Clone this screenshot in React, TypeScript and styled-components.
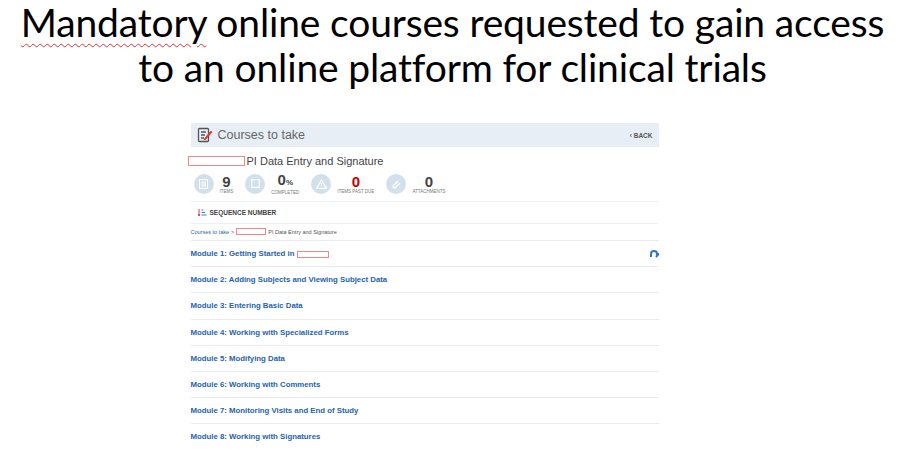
import React from "react";
import styled, { createGlobalStyle } from "styled-components";

const G = createGlobalStyle`
  body { margin: 0; background: #fff; font-family: "Liberation Sans", Arial, sans-serif; }
`;
const Page = styled.div`
  width: 905px; height: 474px; overflow: hidden; display: flex; flex-direction: column; align-items: center;
`;
const Title = styled.h1`
  margin: 0 0 0; font-family: Lato, "Open Sans", sans-serif; font-weight: 400; font-size: 39px;
  line-height: 45px; text-align: center; color: #000; letter-spacing: -0.15px;
`;
const Squig = styled.span`
  text-decoration: underline wavy #d33; text-decoration-thickness: 1px; text-underline-offset: 6px;
`;
const Panel = styled.div`
  width: 468px; margin: 33px 0 0 -56px; display: flex; flex-direction: column; font-size: 8px;
`;
const Header = styled.div`
  height: 24px; background: #e8eef6; display: flex; align-items: center; padding: 0 6px; gap: 5px;
  color: #666; font-size: 12.5px;
`;
const Back = styled.span`
  margin-left: auto; font-size: 6.5px; font-weight: bold; color: #555;
`;
const Red = styled.span<{ w: number }>`
  display: inline-block; width: ${p => p.w}px; height: 8px; border: 1px solid #e88; vertical-align: middle;
`;
const CourseTitle = styled.div`
  display: flex; align-items: center; gap: 2px; margin-top: 8px; font-size: 11px; color: #444; margin-left: -3px;
`;
const Stats = styled.div`
  display: flex; align-items: center; gap: 6px; padding: 5px 0 6px 3px; border-bottom: 1px solid #eef1f4;
`;
const Circle = styled.div`
  width: 20px; height: 20px; border-radius: 50%; background: #d2e0ec; display: flex; align-items: center; justify-content: center;
`;
const Stat = styled.div`
  display: flex; flex-direction: column; align-items: center; margin-right: 6px;
`;
const Num = styled.span<{ red?: boolean }>`
  font-size: 15px; font-weight: bold; line-height: 15px; color: ${p => (p.red ? "#c00" : "#444")};
`;
const Lbl = styled.span`
  font-size: 4.5px; color: #777; text-transform: uppercase;
`;
const Seq = styled.div`
  display: flex; align-items: center; gap: 3px; padding: 6px 7px; font-size: 6.5px; font-weight: bold; color: #444;
  border-bottom: 1px solid #eef1f4;
`;
const Crumb = styled.div`
  font-size: 5.5px; color: #555; padding: 4px 0 5px; display: flex; align-items: center; gap: 2px;
  a { color: #2a64b0; }
`;
const Row = styled.div`
  height: 25.2px; display: flex; align-items: center; justify-content: space-between; border-top: 1px solid #e6ecf2;
  font-size: 7.8px; font-weight: bold; color: #2563ad;
`;

const mods = [
  "Module 2: Adding Subjects and Viewing Subject Data",
  "Module 3: Entering Basic Data",
  "Module 4: Working with Specialized Forms",
  "Module 5: Modifying Data",
  "Module 6: Working with Comments",
  "Module 7: Monitoring Visits and End of Study",
  "Module 8: Working with Signatures",
];

export default function App() {
  return (
    <Page>
      <G />
      <Title>
        <Squig>Mandatory</Squig> online courses requested to gain access<br />to an online platform for clinical trials
      </Title>
      <Panel>
        <Header>
          <svg width="16" height="16" viewBox="0 0 16 16" fill="none" stroke="#555" strokeWidth="1.3">
            <rect x="1.5" y="1.5" width="10" height="13" rx="1" />
            <path d="M4 5h5M4 8h4M4 11h3" />
            <path d="M14 4l-6 7-1 2 2-1 6-7z" fill="#d33" stroke="#d33" strokeWidth="0.8" />
          </svg>
          Courses to take
          <Back>‹ BACK</Back>
        </Header>
        <CourseTitle><Red w={55} />PI Data Entry and Signature</CourseTitle>
        <Stats>
          <Circle><svg width="9" height="10"><rect x="0.5" y="0.5" width="8" height="9" fill="none" stroke="#fff" /><path d="M2 3h5M2 5h5M2 7h5" stroke="#fff" /></svg></Circle>
          <Stat><Num>9</Num><Lbl>Items</Lbl></Stat>
          <Circle><svg width="9" height="9"><rect x="0.5" y="0.5" width="8" height="8" fill="none" stroke="#fff" strokeWidth="1.5" /></svg></Circle>
          <Stat><Num>0<small style={{ fontSize: 8 }}>%</small></Num><Lbl>Completed</Lbl></Stat>
          <Circle><svg width="11" height="10"><path d="M5.5 1L10.5 9.5H0.5z" fill="none" stroke="#fff" strokeWidth="1.3" /><path d="M5.5 4v3" stroke="#fff" /></svg></Circle>
          <Stat><Num red>0</Num><Lbl>Items past due</Lbl></Stat>
          <Circle><svg width="10" height="10"><path d="M7 2L2.5 6.5a1.3 1.3 0 0 0 2 2L9 4" fill="none" stroke="#fff" strokeWidth="1.3" /></svg></Circle>
          <Stat><Num>0</Num><Lbl>Attachments</Lbl></Stat>
        </Stats>
        <Seq>
          <svg width="9" height="9"><path d="M1 1v7M0 6l1 2 1-2" stroke="#c44" fill="none" /><path d="M3.5 2h2M3.5 4.5h3.5M3.5 7h5" stroke="#3a7cc7" /></svg>
          SEQUENCE NUMBER
        </Seq>
        <Crumb><a>Courses to take</a> &gt; <Red w={28} style={{ height: 5 }} />PI Data Entry and Signature</Crumb>
        <Row>
          <span>Module 1: Getting Started in <Red w={30} style={{ height: 5 }} /></span>
          <svg width="10" height="9"><path d="M2 8V5a3 3 0 0 1 6 0h1.5L7 8" fill="none" stroke="#2f78c0" strokeWidth="2" /></svg>
        </Row>
        {mods.map(m => <Row key={m}>{m}</Row>)}
      </Panel>
    </Page>
  );
}
